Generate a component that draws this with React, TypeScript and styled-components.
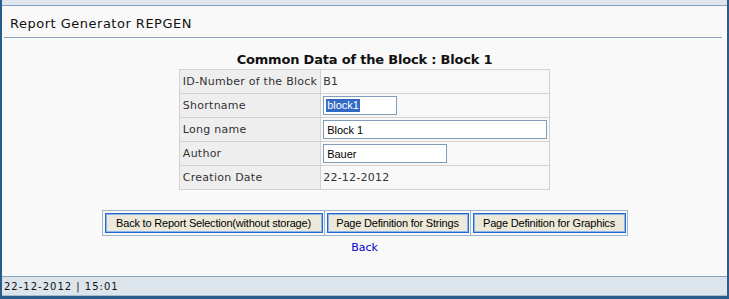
import React from "react";
import styled, { createGlobalStyle } from "styled-components";

const GlobalStyle = createGlobalStyle`
  html, body {
    margin: 0;
    padding: 0;
    background: #f9f9f9;
  }
  body {
    font-family: "DejaVu Sans", Verdana, sans-serif;
  }
`;

const Frame = styled.div`
  width: 729px;
  height: 299px;
  box-sizing: border-box;
  display: flex;
  flex-direction: column;
  padding: 0 2px 3px;
  background: #285d8b;
`;

const TopStrip = styled.div`
  flex-shrink: 0;
  height: 5px;
  background: #dfe6ee;
  border-bottom: 1px solid #84a2bf;
`;

const Main = styled.main`
  flex: 1;
  display: flex;
  flex-direction: column;
  background: #f9f9f9;
`;

const PageTitle = styled.h1`
  margin: 0 5px 0 2px;
  padding: 10px 0 5px 6px;
  border-bottom: 1px solid #8ca6bf;
  font-family: "DejaVu Sans", Verdana, sans-serif;
  font-size: 13px;
  font-weight: 400;
  line-height: 16px;
  letter-spacing: 0.5px;
  color: #111;
`;

const BlockHeading = styled.h2`
  margin: 14px 0 0;
  text-align: center;
  font-family: "DejaVu Sans", Verdana, sans-serif;
  font-size: 13px;
  font-weight: 700;
  line-height: 16px;
  letter-spacing: -0.2px;
  color: #111;
`;

const DataTable = styled.table`
  margin: 1px auto 0;
  border-collapse: collapse;
  width: 371px;
  font-family: "DejaVu Sans", Verdana, sans-serif;
  font-size: 11px;
  letter-spacing: 0.25px;
  color: #333;
`;

const LabelCell = styled.td`
  width: 134px;
  height: 23px;
  padding: 0 3px;
  background: #eeeeee;
  border: 1px solid #d2d2d2;
  white-space: nowrap;
  vertical-align: middle;
`;

const ValueCell = styled.td`
  height: 23px;
  padding: 0 2px;
  background: #f8f8f8;
  border: 1px solid #d2d2d2;
  vertical-align: middle;
`;

const FieldBox = styled.div<{ $w: number }>`
  box-sizing: border-box;
  display: flex;
  align-items: center;
  width: ${(p) => p.$w}px;
  height: 19px;
  padding: 0 3px;
  border: 1px solid #7f9db9;
  background: #fff;
  font-family: "Liberation Sans", Arial, sans-serif;
  font-size: 11px;
  letter-spacing: 0;
  color: #000;
`;

const Selected = styled.span`
  padding: 0 1px;
  margin-left: -1px;
  line-height: 13px;
  background: #316ac5;
  color: #fff;
`;

const ButtonGroup = styled.div`
  margin: 20px auto 0;
  display: flex;
  border: 1px solid #9fb4c9;
`;

const ButtonCell = styled.div`
  padding: 2px 1px 2px 2px;
  & + & {
    border-left: 1px solid #9fb4c9;
  }
`;

const ActionButton = styled.button<{ $w: number }>`
  display: block;
  box-sizing: border-box;
  width: ${(p) => p.$w}px;
  height: 20px;
  padding: 0;
  border: 1px solid #1f68d5;
  box-shadow: inset 0 0 0 1px #8fb3ea;
  background: #ece9d8;
  font-family: "Liberation Sans", Arial, sans-serif;
  font-size: 11px;
  letter-spacing: -0.2px;
  color: #000;
  white-space: nowrap;
`;

const BackLink = styled.a`
  display: block;
  margin: 5px auto 0;
  font-family: "DejaVu Sans", Verdana, sans-serif;
  font-size: 11px;
  line-height: 14px;
  color: #0000cc;
  text-decoration: none;
  text-align: center;
`;

const StatusBar = styled.footer`
  flex-shrink: 0;
  height: 18px;
  display: flex;
  align-items: center;
  padding-left: 2px;
  background: #dde5ec;
  border-top: 1px solid #84a2bf;
  border-bottom: 1px solid #a9bccd;
  font-family: "DejaVu Sans", Verdana, sans-serif;
  font-size: 10px;
  letter-spacing: 1px;
  color: #111;
`;

const rows: { label: string; value: React.ReactNode }[] = [
  { label: "ID-Number of the Block", value: "B1" },
  {
    label: "Shortname",
    value: (
      <FieldBox $w={74}>
        <Selected>block1</Selected>
      </FieldBox>
    ),
  },
  { label: "Long name", value: <FieldBox $w={224}>Block 1</FieldBox> },
  { label: "Author", value: <FieldBox $w={124}>Bauer</FieldBox> },
  { label: "Creation Date", value: "22-12-2012" },
];

const buttons = [
  { text: "Back to Report Selection(without storage)", w: 218 },
  { text: "Page Definition for Strings", w: 142 },
  { text: "Page Definition for Graphics", w: 153 },
];

export default function App() {
  return (
    <>
      <GlobalStyle />
      <Frame>
        <TopStrip />
        <Main>
          <PageTitle>Report Generator REPGEN</PageTitle>
          <BlockHeading>Common Data of the Block : Block 1</BlockHeading>
          <DataTable>
            <tbody>
              {rows.map((r) => (
                <tr key={r.label}>
                  <LabelCell>{r.label}</LabelCell>
                  <ValueCell>{r.value}</ValueCell>
                </tr>
              ))}
            </tbody>
          </DataTable>
          <ButtonGroup>
            {buttons.map((b) => (
              <ButtonCell key={b.text}>
                <ActionButton type="button" $w={b.w}>
                  {b.text}
                </ActionButton>
              </ButtonCell>
            ))}
          </ButtonGroup>
          <BackLink href="#">Back</BackLink>
        </Main>
        <StatusBar>22-12-2012 | 15:01</StatusBar>
      </Frame>
    </>
  );
}
